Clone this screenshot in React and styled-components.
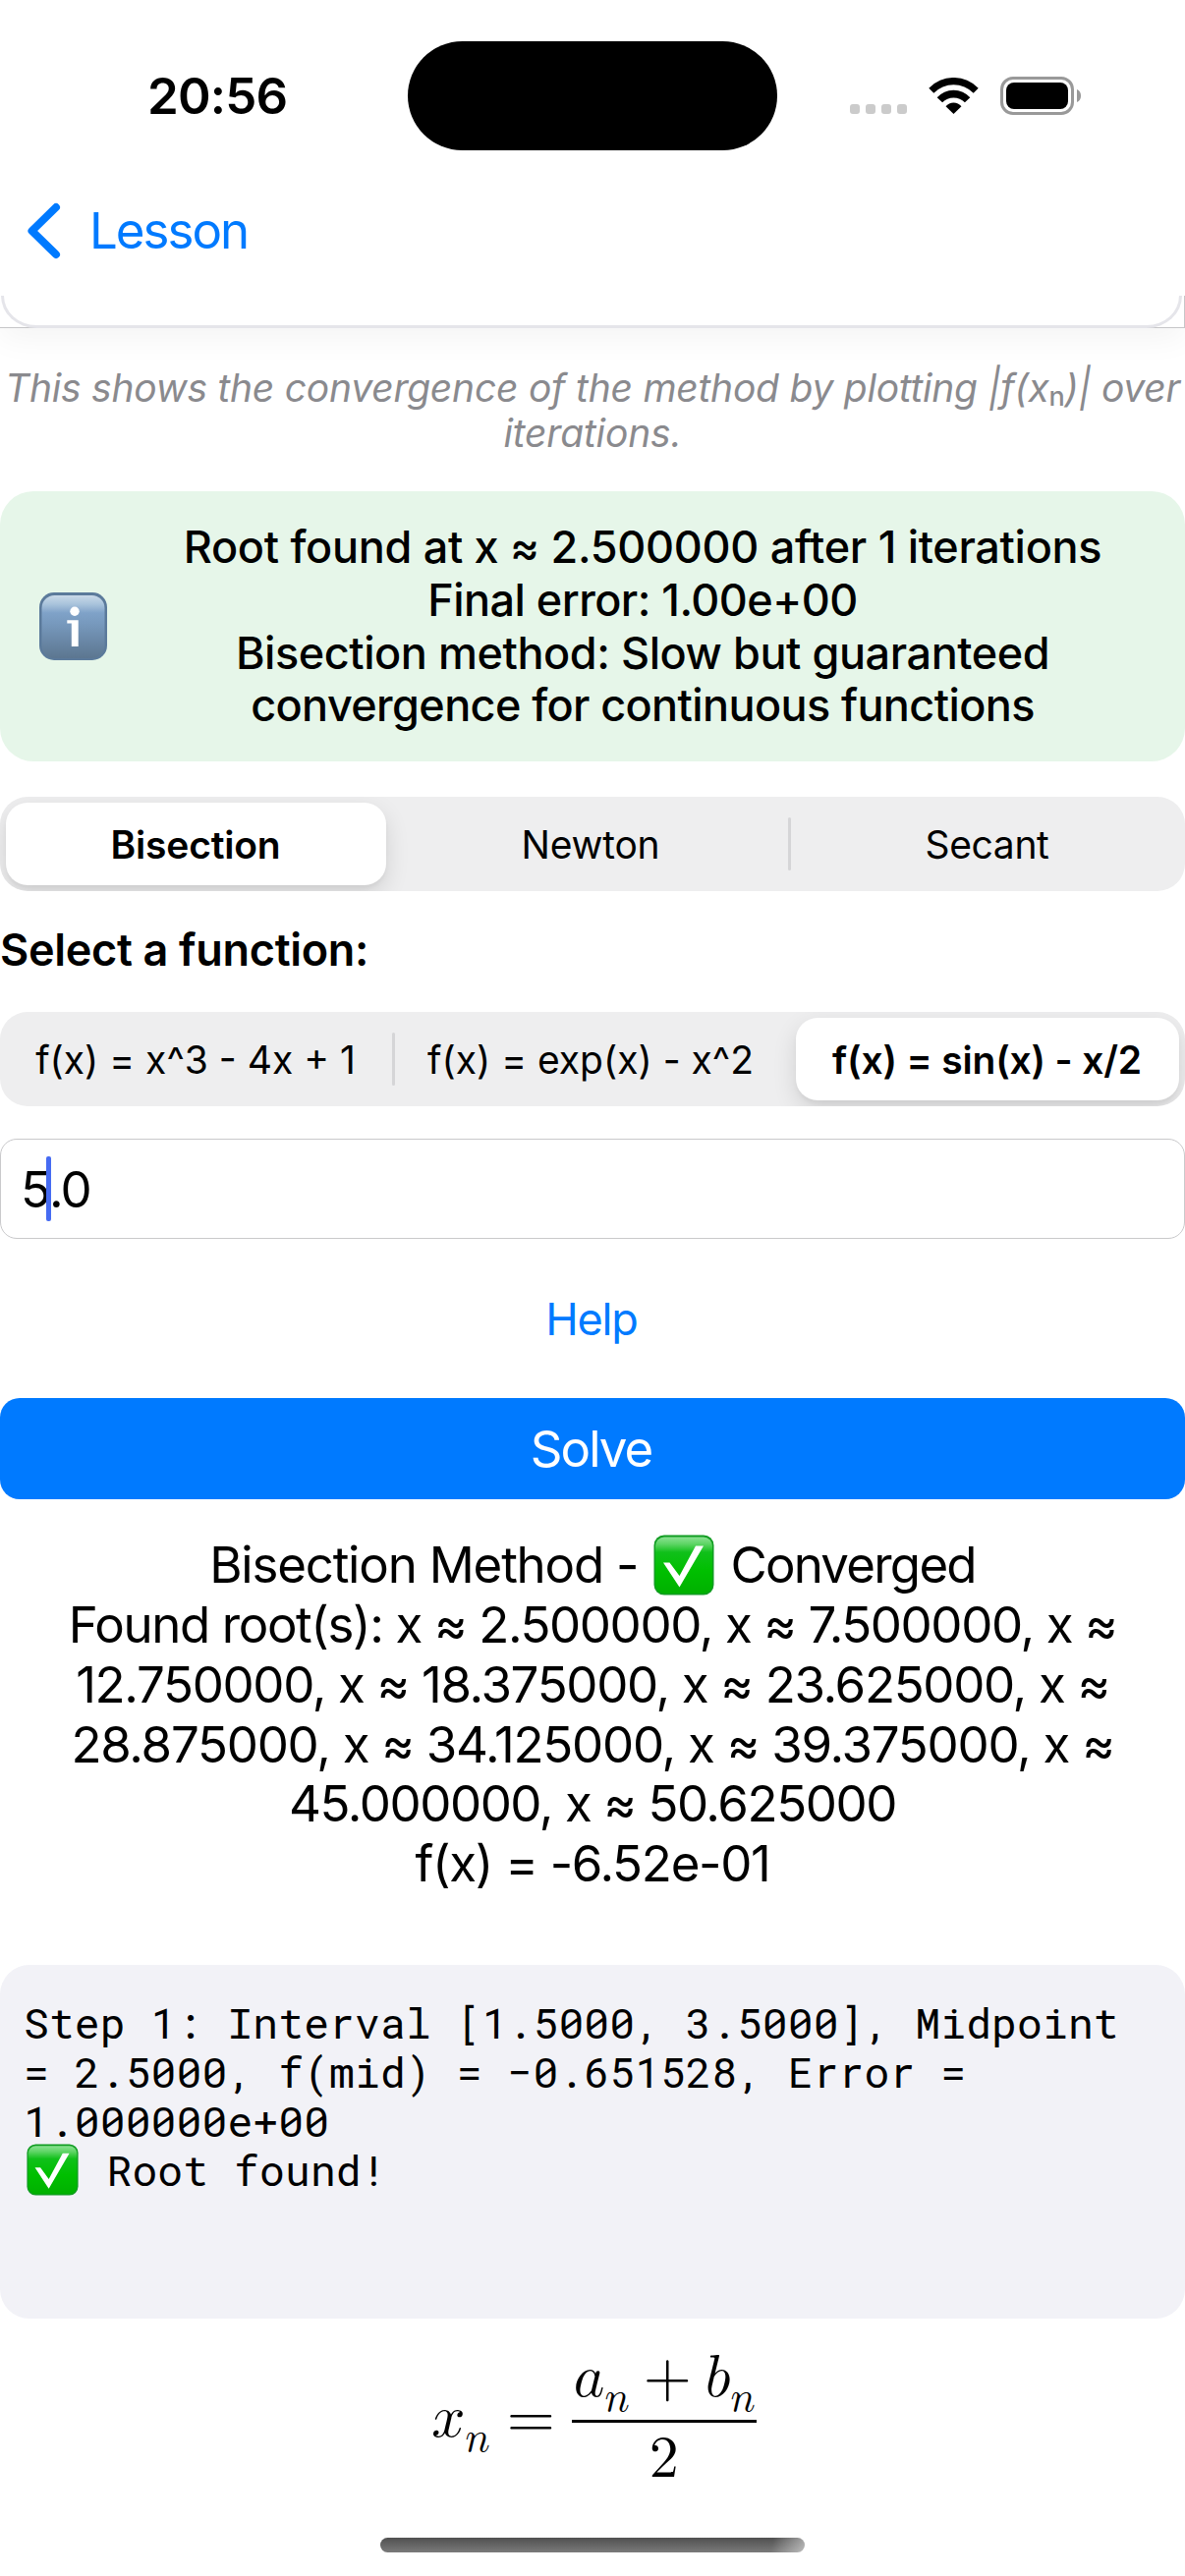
import React from "react";
import styled, { createGlobalStyle, css } from "styled-components";

const GlobalStyle = createGlobalStyle`
  * { box-sizing: border-box; }
  body {
    margin: 0;
    background: #fff;
    color: #000;
    font-family: Inter, "Liberation Sans", sans-serif;
    font-optical-sizing: none;
  }
`;

const Screen = styled.div`
  width: 1206px;
  height: 2622px;
  overflow: hidden;
  display: flex;
  flex-direction: column;
  background: #fff;
`;

/* ---------- status bar ---------- */
const StatusBar = styled.header`
  flex: none;
  height: 194px;
  display: grid;
  grid-template-columns: 415px 376px 415px;
  align-items: center;
`;
const Clock = styled.time`
  padding: 2px 0 0 150px;
  font-size: 51px;
  font-weight: 600;
  line-height: 60px;
  letter-spacing: -0.8px;
`;
const Island = styled.div`
  height: 111px;
  border-radius: 56px;
  background: #000;
`;
const Indicators = styled.div`
  display: flex;
  align-items: center;
  padding-left: 74px;
  padding-top: 1px;
`;
const SignalDots = styled.div`
  display: flex;
  gap: 6px;
  margin: 27px 22px 0 0;
`;
const Dot = styled.span`
  width: 10px;
  height: 10px;
  border-radius: 3px;
  background: #cbcbcb;
`;
const WifiIcon = styled.svg`
  width: 51px;
  height: 37px;
  margin-right: 22px;
`;
const BatteryIcon = styled.svg`
  width: 83px;
  height: 39px;
`;

/* ---------- navigation ---------- */
const NavBar = styled.nav`
  flex: none;
  height: 107px;
  padding: 0 0 26px 27px;
  display: flex;
  align-items: center;
  color: #007aff;
`;
const BackArrow = styled.svg`
  width: 35px;
  height: 58px;
  margin-right: 29px;
`;
const BackLabel = styled.span`
  font-size: 51px;
  line-height: 60px;
  letter-spacing: -2px;
`;

/* ---------- chart card bottom edge ---------- */
const ChartFrame = styled.div`
  flex: none;
  height: 33px;
  padding: 0 2px 0 1px;
  background: #fff;
  border-right: 1px solid #c6c6c8;
  box-shadow: inset 0 -1px 0 #c6c6c8, 0 8px 34px rgba(0, 0, 0, 0.055);
  clip-path: inset(0 0 -90px 0);
`;
const ChartCard = styled.div`
  height: 33px;
  border: 3px solid #e5e5ea;
  border-top: none;
  border-radius: 0 0 36px 36px / 0 0 33px 33px;
`;
const Caption = styled.p`
  flex: none;
  margin: 38px 0 0;
  display: flex;
  flex-direction: column;
  align-items: center;
  color: #8a8a8e;
  font-size: 39px;
  font-style: italic;
  line-height: 46px;
`;
const Line = styled.span`
  white-space: pre;
  letter-spacing: ${(p) => p.$track || 0}px;
`;
const Subscript = styled.span`
  font-style: normal;
  font-size: 27px;
  font-weight: 500;
  line-height: 0;
  vertical-align: -4px;
`;

/* ---------- result notice ---------- */
const Notice = styled.section`
  flex: none;
  margin-top: 36px;
  height: 275px;
  padding: 0 30px 0 40px;
  display: flex;
  align-items: center;
  background: #e6f6e9;
  border-radius: 34px;
`;
const InfoIcon = styled.svg`
  width: 69px;
  height: 69px;
  flex: none;
`;
const NoticeText = styled.div`
  flex: 1;
  margin-left: 23px;
  display: flex;
  flex-direction: column;
  align-items: center;
  font-size: 45px;
  font-weight: 500;
  line-height: 53.7px;
`;

/* ---------- segmented control ---------- */
const Segmented = styled.div`
  flex: none;
  height: 96px;
  padding: 6px;
  display: grid;
  grid-template-columns: 387px 1fr 390px;
  gap: 14px;
  background: #eeeeef;
  border-radius: 28px;
  overflow: hidden;
  ${(p) => p.$top && css`margin-top: ${p.$top}px;`}
`;
const Segment = styled.button`
  position: relative;
  border: none;
  padding: 0;
  font: inherit;
  font-size: 39px;
  color: #000;
  white-space: pre;
  text-indent: -1px;
  letter-spacing: ${(p) => p.$track || 0}px;
  background: transparent;
  border-radius: 22px;
  ${(p) =>
    p.$active &&
    css`
      font-weight: 560;
      background: #fff;
      box-shadow: 0 9px 24px rgba(0, 0, 0, 0.12), 0 4px 4px rgba(0, 0, 0, 0.04);
    `}
  ${(p) =>
    p.$divided &&
    css`
      &::before {
        content: "";
        position: absolute;
        left: -8px;
        top: 15px;
        width: 3px;
        height: 54px;
        border-radius: 2px;
        background: #d5d5d7;
      }
    `}
`;
const FieldLabel = styled.h2`
  flex: none;
  height: 119px;
  margin: 0 0 4px;
  padding-left: 0;
  font-size: 45px;
  font-weight: 600;
  line-height: 119px;
  letter-spacing: -0.31px;
`;

/* ---------- input and actions ---------- */
const InputBox = styled.div`
  flex: none;
  height: 102px;
  margin-top: 33px;
  padding-left: 20px;
  display: flex;
  align-items: center;
  border: 1px solid #c9c9cb;
  border-radius: 17px;
  font-size: 51px;
  letter-spacing: -2px;
`;
const Caret = styled.i`
  width: 5px;
  height: 66px;
  margin: 0 -2px 0 -3px;
  border-radius: 2px;
  background: #466bf2;
  z-index: 1;
`;
const HelpButton = styled.button`
  flex: none;
  height: 162px;
  border: none;
  background: none;
  color: #007aff;
  font: inherit;
  font-size: 45px;
  letter-spacing: -1.2px;
  text-indent: -2px;
`;
const SolveButton = styled.button`
  flex: none;
  height: 103px;
  border: none;
  border-radius: 20px;
  background: #007aff;
  color: #fff;
  font: inherit;
  font-size: 51px;
  letter-spacing: -2px;
  text-indent: -3px;
`;

/* ---------- outcome ---------- */
const Outcome = styled.section`
  flex: none;
  padding-top: 37px;
  height: 474px;
  display: flex;
  flex-direction: column;
  align-items: center;
  font-size: 51px;
  line-height: 60.85px;
`;
const OutcomeHeading = styled.div`
  height: 60.85px;
  display: flex;
  align-items: center;
  gap: 16px;
`;
const CheckIcon = styled.svg`
  flex: none;
  width: ${(p) => p.$size}px;
  height: ${(p) => p.$size}px;
`;

/* ---------- step log ---------- */
const StepLog = styled.section`
  flex: none;
  height: 360px;
  padding: 34px 24px;
  background: #f2f2f7;
  border-radius: 30px;
  font-family: "Roboto Mono", "Noto Sans Mono", "DejaVu Sans Mono", monospace;
  font-size: 43px;
  line-height: 50.2px;
  display: flex;
  flex-direction: column;
`;
const FoundRow = styled.div`
  display: flex;
  align-items: center;
  gap: 28.5px;
  height: 48px;
  padding-left: 3px;
`;

/* ---------- formula ---------- */
const Formula = styled.div`
  flex: none;
  height: 223px;
  padding: 0 0 20px 3px;
  display: flex;
  justify-content: center;
  align-items: center;
  font-family: "Latin Modern Math", "Liberation Serif", serif;
  font-size: 60px;
  line-height: 60px;
  white-space: pre;
`;
const Index = styled.span`
  font-size: 42px;
  line-height: 0;
  vertical-align: -15px;
`;
const Operator = styled.span`
  margin: 0 17px;
  font-size: 63px;
`;
const Fraction = styled.span`
  display: flex;
  flex-direction: column;
  align-items: center;
`;
const Numerator = styled.span`
  padding: 0 1px 12px 2px;
  border-bottom: 3px solid #000;
`;
const PlusSign = styled.span`
  margin: 0 14px;
  font-size: 63px;
  line-height: 0;
`;
const Denominator = styled.span`
  padding-top: 7px;
`;
const HomeIndicator = styled.div`
  flex: none;
  align-self: center;
  width: 432px;
  height: 15px;
  border-radius: 8px;
  background:
    linear-gradient(100deg, transparent 92%, rgba(255, 255, 255, 0.5) 100%),
    linear-gradient(#505050, #7a7a7a);
`;

function Check({ size, id }) {
  return (
    <CheckIcon $size={size} viewBox="0 0 62 62">
      <defs>
        <linearGradient id={id} x1="0" y1="0" x2="0" y2="1">
          <stop offset="0" stopColor="#8be292" />
          <stop offset="0.12" stopColor="#5fd566" />
          <stop offset="0.27" stopColor="#10c01a" />
          <stop offset="0.6" stopColor="#00bf00" />
          <stop offset="1" stopColor="#00b000" />
        </linearGradient>
      </defs>
      <rect x="0.5" y="0.5" width="61" height="61" rx="10.5" fill="#119c22" />
      <rect x="2" y="2.5" width="58" height="57.5" rx="9" fill={`url(#${id})`} />
      <path d="M10 28.5H16.5L26.5 42L43 11.5H51L26.5 53.5Z" fill="#fff" />
    </CheckIcon>
  );
}

function Info() {
  return (
    <InfoIcon viewBox="0 0 69 69">
      <defs>
        <linearGradient id="infoFace" x1="0" y1="0" x2="0" y2="1">
          <stop offset="0" stopColor="#c9d9e8" />
          <stop offset="0.14" stopColor="#a9c3dc" />
          <stop offset="0.28" stopColor="#7fa2c8" />
          <stop offset="0.45" stopColor="#7799bd" />
          <stop offset="1" stopColor="#5c7690" />
        </linearGradient>
      </defs>
      <rect width="69" height="69" rx="15" fill="#5b7a9b" />
      <rect x="2.5" y="3" width="64" height="64" rx="13" fill="url(#infoFace)" />
      <circle cx="36" cy="19.3" r="4.7" fill="#fff" />
      <path d="M28.3 28.3H39.7V55H32.8V31.5H28.3Z" fill="#fff" />
    </InfoIcon>
  );
}

const methods = [
  { label: "Bisection", track: -0.2, active: true },
  { label: "Newton", track: -0.22 },
  { label: "Secant", track: -0.35, divided: true },
];
const functions = [
  { label: "f(x) = x^3 - 4x + 1", track: 0 },
  { label: "f(x) = exp(x) - x^2", track: 0, divided: true },
  { label: "f(x) = sin(x) - x/2", track: -0.18, active: true },
];
const notice = [
  ["Root found at x ≈ 2.500000 after 1 iterations", -0.3],
  ["Final error: 1.00e+00", -0.54],
  ["Bisection method: Slow but guaranteed", -0.43],
  ["convergence for continuous functions", -0.61],
];
const roots = [
  ["Found root(s): x ≈ 2.500000, x ≈ 7.500000, x ≈", -1.4],
  ["12.750000, x ≈ 18.375000, x ≈ 23.625000, x ≈", -1.34],
  ["28.875000, x ≈ 34.125000, x ≈ 39.375000, x ≈", -1.27],
  ["45.000000, x ≈ 50.625000", -1.45],
  ["f(x) = -6.52e-01", -1.3],
];
const steps = [
  "Step 1: Interval [1.5000, 3.5000], Midpoint",
  "= 2.5000, f(mid) = −0.651528, Error =",
  "1.000000e+00",
];

function Segments({ items, top }) {
  return (
    <Segmented $top={top}>
      {items.map((s) => (
        <Segment key={s.label} $active={s.active} $divided={s.divided} $track={s.track}>
          {s.label}
        </Segment>
      ))}
    </Segmented>
  );
}

export default function App() {
  return (
    <>
      <GlobalStyle />
      <Screen>
        <StatusBar>
          <Clock>20:56</Clock>
          <Island />
          <Indicators>
            <SignalDots>
              <Dot />
              <Dot />
              <Dot />
              <Dot />
            </SignalDots>
            <WifiIcon viewBox="0 0 50 37" preserveAspectRatio="none">
              <path d="M0.3 10.8A33.6 33.6 0 0 1 49.7 10.8L44.8 15.8A27.3 27.3 0 0 0 5.2 15.8Z" />
              <path d="M8.5 20.3A21.7 21.7 0 0 1 41.5 20.3L36.2 25.3A15.7 15.7 0 0 0 13.8 25.3Z" />
              <path d="M17.2 29.3A10 10 0 0 1 32.8 29.3L25 37Z" />
            </WifiIcon>
            <BatteryIcon viewBox="0 0 83 39">
              <rect x="1.5" y="1.5" width="72" height="36" rx="11.5" fill="none" stroke="#999" strokeWidth="3" />
              <rect x="6" y="6" width="63" height="27" rx="8" />
              <path d="M78 13C83.4 15 83.4 24 78 26Z" fill="#999" />
            </BatteryIcon>
          </Indicators>
        </StatusBar>

        <NavBar>
          <BackArrow viewBox="0 0 35 58">
            <path d="M30 5L5.5 29L30 53" fill="none" stroke="currentColor" strokeWidth="8" strokeLinecap="round" strokeLinejoin="round" />
          </BackArrow>
          <BackLabel>Lesson</BackLabel>
        </NavBar>

        <ChartFrame>
          <ChartCard />
        </ChartFrame>

        <Caption>
          <Line $track={-0.24}>
            This shows the convergence of the method by plotting |f(x<Subscript>n</Subscript>)| over
          </Line>
          <Line $track={-0.16}>iterations.</Line>
        </Caption>

        <Notice>
          <Info />
          <NoticeText>
            {notice.map(([text, track]) => (
              <Line key={text} $track={track}>{text}</Line>
            ))}
          </NoticeText>
        </Notice>

        <Segments items={methods} top={36} />
        <FieldLabel>Select a function:</FieldLabel>
        <Segments items={functions} />

        <InputBox>
          <span>5</span>
          <Caret />
          <span>.0</span>
        </InputBox>
        <HelpButton>Help</HelpButton>
        <SolveButton>Solve</SolveButton>

        <Outcome>
          <OutcomeHeading>
            <Line $track={-1.2}>Bisection Method -</Line>
            <Check size={62} id="checkLarge" />
            <Line $track={-1.75}>Converged</Line>
          </OutcomeHeading>
          {roots.map(([text, track]) => (
            <Line key={text} $track={track}>{text}</Line>
          ))}
        </Outcome>

        <StepLog>
          {steps.map((text) => (
            <Line key={text} $track={0.12}>{text}</Line>
          ))}
          <FoundRow>
            <Check size={53} id="checkSmall" />
            <Line $track={0.12}>Root found!</Line>
          </FoundRow>
        </StepLog>

        <Formula>
          <span>𝑥<Index>𝑛</Index></span>
          <Operator>=</Operator>
          <Fraction>
            <Numerator>
              𝑎<Index>𝑛</Index>
              <PlusSign>+</PlusSign>
              𝑏<Index>𝑛</Index>
            </Numerator>
            <Denominator>2</Denominator>
          </Fraction>
        </Formula>
        <HomeIndicator />
      </Screen>
    </>
  );
}
